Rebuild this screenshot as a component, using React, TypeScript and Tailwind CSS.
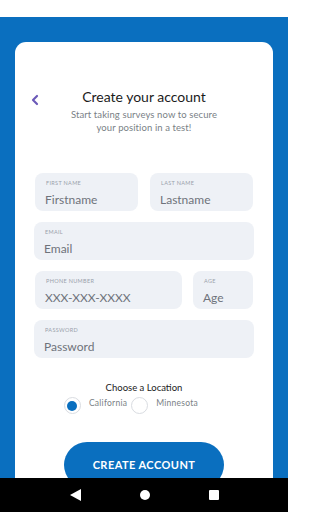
import {ChevronLeft} from 'lucide-react'

const font = {fontFamily: '"Lato", "Open Sans", sans-serif'}

function Field({label, placeholder}: {label: string; placeholder: string}) {
  return (
    <div className="h-[38px] rounded-[8px] bg-[#eef1f6] pl-[10px] pt-[7px]">
      <div className="pl-[1px] text-[5.5px] leading-[7px] tracking-[0.06em] text-[#9aa1ab] uppercase">{label}</div>
      <div className="mt-[6px] text-[12px] leading-[14px] text-[#6e737b]">{placeholder}</div>
    </div>
  )
}

function Radio({label, checked}: {label: string; checked?: boolean}) {
  return (
    <label className="flex items-center gap-[8px]">
      <span className="flex h-[17px] w-[17px] items-center justify-center rounded-full border border-[#d9dce1] bg-white">
        {checked && <span className="h-[10px] w-[10px] rounded-full bg-[#0a6fbf]" />}
      </span>
      <span className="-mt-[4px] text-[8.5px] tracking-[0.03em] text-[#7a7f86]">{label}</span>
    </label>
  )
}

export default function App() {
  return (
    <div className="relative h-[512px] w-[288px] overflow-hidden bg-[#0a6fbf]" style={font}>
      {/* Status bar */}
      <div className="h-[17px] bg-white" />

      <div className="px-[15px] pt-[25px]">
        <div className="h-[480px] rounded-[11px] bg-white">
          {/* Header */}
          <div className="relative pt-[46px] text-center">
            <ChevronLeft className="absolute top-[50px] left-[12px] h-[16px] w-[16px] text-[#6b59b8]" strokeWidth={3.2} />
            <h1 className="text-[14px] leading-[18px] text-[#1b1b1b]">Create your account</h1>
            <p className="mt-[2px] text-[9.5px] leading-[13px] tracking-[0.01em] text-[#7a7f86]">
              Start taking surveys now to secure
              <br />
              your position in a test!
            </p>
          </div>

          {/* Form */}
          <div className="mt-[39px] flex flex-col gap-[11px] px-[19px]">
            <div className="grid grid-cols-2 gap-[12px] px-[1px]">
              <Field label="First name" placeholder="Firstname" />
              <Field label="Last name" placeholder="Lastname" />
            </div>
            <Field label="Email" placeholder="Email" />
            <div className="grid grid-cols-[1fr_60px] gap-[11px] px-[1px]">
              <Field label="Phone number" placeholder="XXX-XXX-XXXX" />
              <Field label="Age" placeholder="Age" />
            </div>
            <Field label="Password" placeholder="Password" />
          </div>

          {/* Location */}
          <div className="mt-[24px] flex flex-col items-center">
            <div className="text-[9.5px] leading-[12px] text-[#1b1b1b]">Choose a Location</div>
            <div className="mt-[3px] flex gap-[4px] pr-[26px]">
              <Radio label="California" checked />
              <Radio label="Minnesota" />
            </div>
          </div>

          {/* Button */}
          <div className="mt-[28px] flex justify-center">
            <button className="h-[46px] w-[160px] rounded-full bg-[#0a6fbf] text-[11px] font-bold tracking-[0.04em] text-white">
              CREATE ACCOUNT
            </button>
          </div>
        </div>
      </div>

      {/* Android navigation bar */}
      <div className="absolute inset-x-0 bottom-0 flex h-[34px] items-center justify-around bg-black px-[40px]">
        <svg width="11" height="12" viewBox="0 0 11 12">
          <path d="M0 6 L11 0 L11 12 Z" fill="white" />
        </svg>
        <div className="h-[10px] w-[10px] rounded-full bg-white" />
        <div className="h-[10px] w-[10px] rounded-[1px] bg-white" />
      </div>
    </div>
  )
}
